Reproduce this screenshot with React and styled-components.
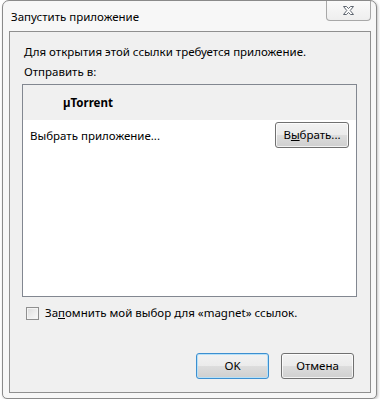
import styled, { createGlobalStyle } from "styled-components";

const GlobalStyle = createGlobalStyle`
  html, body {
    margin: 0;
    background: #ffffff;
  }
  body {
    font-family: "Segoe UI", "Noto Sans", sans-serif;
    font-size: 11.5px;
    color: #000000;
  }
`;

const Window = styled.div`
  box-sizing: border-box;
  width: 375px;
  height: 399px;
  margin-left: 2px;
  padding: 0 5px 5px 6px;
  display: flex;
  flex-direction: column;
  background: #f7f7f7;
  border: 1px solid #8a8a8a;
  border-radius: 7px 7px 5px 5px;
  box-shadow: 1px 1px 3px rgba(0, 0, 0, 0.25);
`;

const TitleBar = styled.div`
  height: 30px;
  display: flex;
  justify-content: space-between;
  align-items: flex-start;
`;

const Title = styled.div`
  padding: 8px 0 0 2px;
  line-height: 16px;
  color: #000;
`;

const CloseButton = styled.div`
  box-sizing: border-box;
  width: 45px;
  height: 20px;
  display: flex;
  align-items: center;
  justify-content: center;
  border: 1px solid #a8a8a8;
  border-top: none;
  border-radius: 0 0 4px 4px;
  background: linear-gradient(#fafafa, #eeeeee);
`;

const Client = styled.div`
  flex: 1;
  display: flex;
  flex-direction: column;
  padding: 0 13px 0 12px;
  background: #f0f0f0;
  border: 1px solid #8f8f8f;
`;

const Line = styled.div`
  margin-top: ${(p) => p.$top}px;
  padding-left: 2px;
  line-height: 16px;
`;

const ListBox = styled.div`
  box-sizing: border-box;
  height: 213px;
  margin-top: 4px;
  display: flex;
  flex-direction: column;
  background: #ffffff;
  border: 1px solid #828790;
`;

const AppHeader = styled.div`
  height: 35px;
  display: flex;
  align-items: center;
  padding-left: 40px;
  background: #f0f0f0;
  font-weight: bold;
`;

const ChooseRow = styled.div`
  display: flex;
  align-items: center;
  justify-content: space-between;
  padding: 2px 7px 0 7px;
`;

const Button = styled.div`
  box-sizing: border-box;
  width: ${(p) => p.$width || 73}px;
  height: 26px;
  display: flex;
  align-items: center;
  justify-content: center;
  border: 1px solid ${(p) => (p.$default ? "#3c8fd0" : "#707070")};
  border-radius: 3px;
  background: linear-gradient(#f2f2f2 0%, #ebebeb 50%, #dddddd 50%, #cfcfcf 100%);
  box-shadow: inset 0 0 0 1px ${(p) => (p.$default ? "#b6e0f8" : "rgba(255,255,255,0.75)")};
  line-height: 16px;
`;

const CheckRow = styled.label`
  margin-top: 8px;
  padding-left: 4px;
  display: flex;
  align-items: center;
  gap: 6px;
  line-height: 16px;
`;

const CheckBox = styled.span`
  box-sizing: border-box;
  width: 13px;
  height: 13px;
  border: 1px solid #8f8f8f;
  background: linear-gradient(135deg, #dcdcdc, #fbfbfb);
  box-shadow: inset 0 0 0 1px #f4f4f4;
`;

const Footer = styled.div`
  margin-top: auto;
  margin-bottom: 13px;
  margin-right: 3px;
  display: flex;
  justify-content: flex-end;
  gap: 12px;
`;

const CloseGlyph = () => (
  <svg width="13" height="11" viewBox="0 0 13 11">
    <path
      d="M1.5 1.5 H4.5 L6.5 3.6 L8.5 1.5 H11.5 L8.2 5.5 L11.5 9.5 H8.5 L6.5 7.4 L4.5 9.5 H1.5 L4.8 5.5 Z"
      fill="#ffffff"
      stroke="#5f6670"
      strokeWidth="1"
      strokeLinejoin="round"
    />
  </svg>
);

const App = () => {
  return (
    <>
      <GlobalStyle />
      <Window>
        <TitleBar>
          <Title>Запустить приложение</Title>
          <CloseButton>
            <CloseGlyph />
          </CloseButton>
        </TitleBar>
        <Client>
          <Line $top={12}>Для открытия этой ссылки требуется приложение.</Line>
          <Line $top={4}>Отправить в:</Line>
          <ListBox>
            <AppHeader>µTorrent</AppHeader>
            <ChooseRow>
              <span>Выбрать приложение...</span>
              <Button $width={74}>
                В<u>ы</u>брать...
              </Button>
            </ChooseRow>
          </ListBox>
          <CheckRow>
            <CheckBox />
            <span>
              За<u>п</u>омнить мой выбор для «magnet» ссылок.
            </span>
          </CheckRow>
          <Footer>
            <Button $default>OK</Button>
            <Button>Отмена</Button>
          </Footer>
        </Client>
      </Window>
    </>
  );
};

export default App;
